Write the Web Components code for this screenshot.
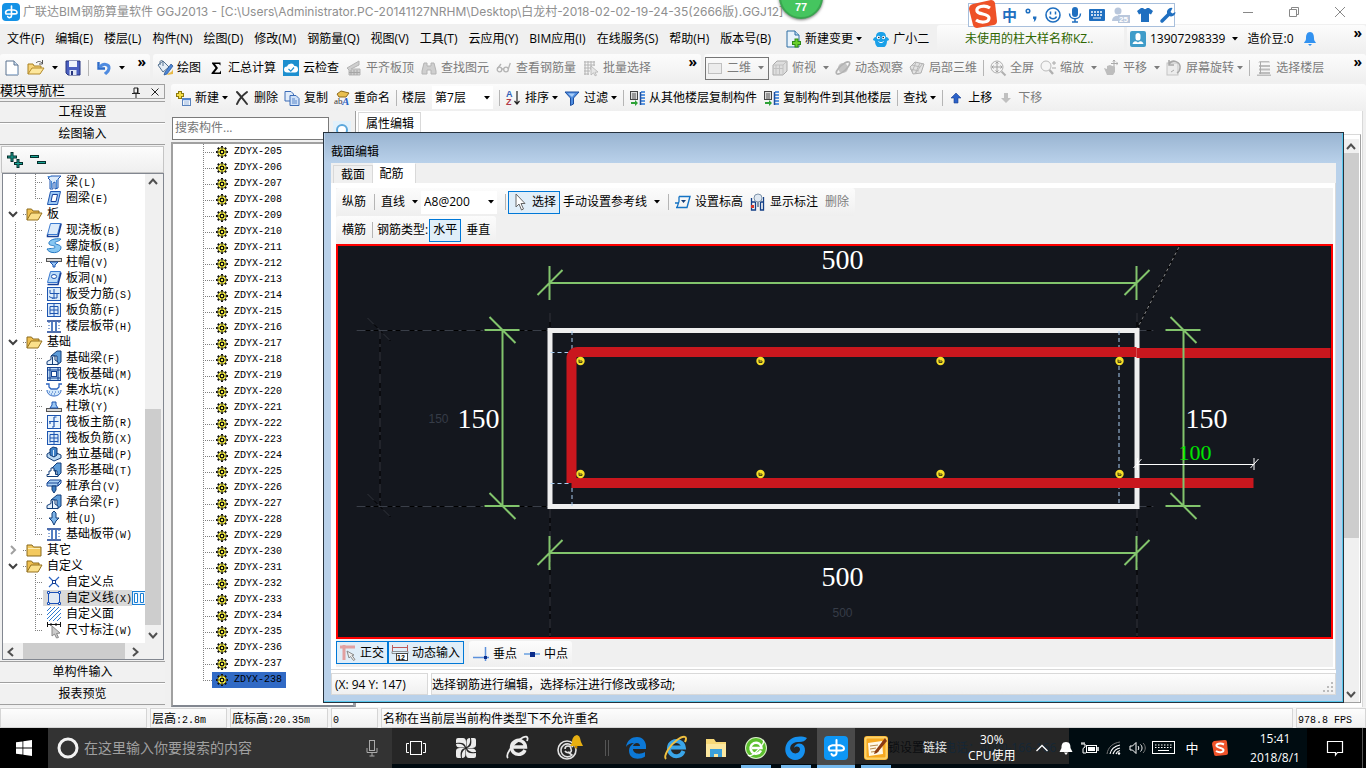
<!DOCTYPE html>
<html lang="zh-CN">
<head>
<meta charset="utf-8">
<meta name="viewport" content="width=device-width, initial-scale=1">
<title>广联达BIM钢筋算量软件 GGJ2013</title>
<style>
html,body{height:100%}
body{margin:0;background:#f0f0f0;color:#000;font:12px/16px "Open Sans","Noto Sans CJK SC",sans-serif;overflow:hidden}
</style>
</head>
<body>
<app-shell></app-shell>
<script>
const MONO = '"Liberation Mono","Noto Sans CJK SC",monospace';

/* Shared drawings. Each entry: [width, height, markup] */
const B = '#1d55b0', L = '#9cc8f4', G = '#b4b4b4', GD = '#9a9a9a';
const ICONS = {
  logo: [18,18,`<rect width="18" height="18" rx="4" fill="#1492e6"/><path d="M9.500 3v9.500a2 2 0 0 1-3.800 1M4 11C2.500 7.500 5.500 6.800 9.500 6.800c3.500 0 5.500.7 5.500 2.700 0 1-.8 1.400-2 1.400H9.500M4 11h5.500" fill="none" stroke="#fff" stroke-width="1.600" stroke-linecap="round"/>`],
  newfile: [16,16,`<path d="M2 1h8l4 4v10H2z" fill="#fff" stroke="#5b7390"/><path d="M10 1v4h4" fill="#cfe0f2" stroke="#5b7390"/><path d="M4 14.500h9.500V7" stroke="#a9bfd8" fill="none"/>`],
  open: [18,16,`<path d="M1 14V4h5l1 2h7v3" fill="#f7d57c" stroke="#a9801f"/><path d="M1 14l4-6h12l-4 6z" fill="#fde79c" stroke="#b48a2a"/><path d="M9 3c2-2 4-2 6 0M15.500 0v4h-3.500" fill="none" stroke="#555"/>`],
  save: [16,16,`<path d="M1 1h14v14H3l-2-2z" fill="#4a5fc0" stroke="#26357f"/><path d="M4 1h8v6H4z" fill="#eef2fb"/><path d="M4.500 10h7v5h-7z" fill="#dfe6f5"/><path d="M6 11h2v4H6z" fill="#26357f"/>`],
  undo: [16,16,`<path d="M2.500 2v6.500H9" fill="none" stroke="#2f6cc8" stroke-width="2.400"/><path d="M3.500 7.500C7 2.500 13.500 4 13 8.500c-.3 3-2.500 4-4 5.500" fill="none" stroke="#4f8be0" stroke-width="3"/>`],
  paint: [16,16,`<path d="M1 5l5-4 6 6-6 5z" fill="#e5edf5" stroke="#53708f"/><path d="M3 5V2c0-2 3-2 3 0v4" fill="none" stroke="#53708f"/><path d="M14 4L8 12l-1 3 3-1 6-8z" fill="#4d86d6" stroke="#24508f" stroke-width=".7"/><path d="M10 15c2-3 5-2 6-6v5z" fill="#e8b945"/>`],
  sigma: [16,16,`<path d="M4 2.500h8.500v3l-1.500-1.500H7l3 4-3.500 4.500h5l1.500-2v3.500H3.500v-1l4-5-3.500-4.500z" fill="#000"/>`],
  cloud: [16,16,`<rect width="16" height="16" fill="#1d8fcf"/><path d="M4 12.500a3 3 0 0 1 0-6 4 4 0 0 1 7.500-.5 3.200 3.200 0 0 1 .5 6.500z" fill="#fff"/><path d="M5.500 9l2.300 2.200L11 7.500" fill="none" stroke="#1d8fcf" stroke-width="1.200"/>`],
  slab: [16,16,`<path d="M1 8L13 1v4L5 9h9v6H3v-5z" fill="#cfcfcf" stroke="${G}"/><path d="M5 10v5M8 10v5M11 10v5M3 12.500h11" stroke="#a6a6a6"/>`],
  binoc: [16,16,`<path d="M3 3h3v3h4V3h3l2 8v3h-5v-4H6v4H1v-3z" fill="#cfcfcf" stroke="${G}"/>`],
  glasses: [16,16,`<g fill="none" stroke="#b4b4b4" stroke-width="1.300"><circle cx="3.500" cy="9.500" r="2.300"/><circle cx="10" cy="9.500" r="2.300"/><path d="M1.500 8.500L5 4M12.300 9l2-6M6 9h2"/></g>`],
  batch: [16,16,`<path d="M1 2h11M1 5h11M1 8h7M1 11h6M1 14h5M2 1v14M5 1v14M8 1v9M11 1v5" stroke="${G}" fill="none"/><path d="M8 6l7 6-3 .3 1.500 3-1.500.5-1.500-3L8 15z" fill="#e6e6e6" stroke="${G}" stroke-width=".8"/>`],
  twod: [16,16,`<rect x="1.500" y="3.500" width="13" height="10" fill="#ececec" stroke="#c0c0c0"/>`],
  cube: [16,16,`<path d="M1 5l4-4h10v10l-4 4H1z" fill="#dedede" stroke="#aaa"/><path d="M1 5h10v10M11 5l4-4M4 5v10M7.500 5v10M1 8.500h10" fill="none" stroke="#c2c2c2"/>`],
  orbit: [16,16,`<circle cx="8" cy="8" r="5" fill="#c4c4c4"/><ellipse cx="8" cy="8" rx="8.500" ry="3" transform="rotate(-42 8 8)" fill="none" stroke="#b2b2b2" stroke-width="1.600"/>`],
  local3d: [16,16,`<path d="M1 7l5-5 9 2-3 9-8 1z" fill="#e3e3e3" stroke="#b0b0b0"/><path d="M3 5l8 2 3-4M6 14l5-7M1 9l9 2M7 2l-4 10M11 3l-5 11" stroke="#b8b8b8" fill="none"/>`],
  full: [16,16,`<circle cx="7" cy="7" r="6" fill="#f3f3f3" stroke="#b0b0b0"/><path d="M7 2v10M2 7h10M5.500 3.500L7 2l1.500 1.500M5.500 10.500L7 12l1.500-1.500M3.500 5.500L2 7l1.500 1.500M10.500 5.500L12 7l-1.500 1.500" fill="none" stroke="#a2a2a2"/><path d="M11.500 11.500l4 4" stroke="#b0b0b0" stroke-width="2"/>`],
  zoom: [16,16,`<circle cx="6" cy="6" r="5" fill="#f5f5f5" stroke="#bbb"/><path d="M9.500 10l3.500 4" stroke="#b0b0b0" stroke-width="2.400"/><path d="M12 3h4M14 1v4M12 8h4" stroke="#aaa"/>`],
  pan: [16,16,`<path d="M1 8l3 1V6l3-1 5 2v5l-2 3H4z" fill="#bdbdbd"/><path d="M11 0v7M8 3.500h7M9.800 1.500L11 0l1.200 1.500M13.500 2.300L15 3.500l-1.500 1.200" stroke="#aaa" fill="none"/>`],
  spin: [16,16,`<rect x="1" y="3" width="11" height="12" fill="#ececec" stroke="#c4c4c4"/><path d="M3 4a6 6 0 0 1 11 4 6 6 0 0 1-3 5M3 0v5h5" fill="none" stroke="#a8a8a8" stroke-width="1.500"/><path d="M5 12l3-2" stroke="#aaa"/>`],
  floors: [16,16,`<path d="M4 1h9l1 1.500H2zM3 5h11v2H3zM3 8.500h11v2H3zM3 12h11v2H3zM1 14.500h14V16H1z" fill="#bdbdbd"/><path d="M4.500 2v12" stroke="#aaa"/>`],
  create: [16,16,`<path d="M5 1v8M1 5h8" stroke="#8c7a10" stroke-width="4"/><path d="M5 2v6M2 5h6" stroke="#f4dd45" stroke-width="2"/><rect x="7.500" y="8.500" width="8" height="7" fill="#f4f8fd" stroke="#5a83bd"/><path d="M8 9.500h7" stroke="#4f86d8" stroke-width="1.500"/><path d="M9 12h5M9 14h5" stroke="#9ab6dc"/>`],
  del: [16,16,`<path d="M3 2c3 3 6 7 10 12M13 2C9 5 5 9 3 14" stroke="#333" stroke-width="2" fill="none" stroke-linecap="round"/>`],
  copy: [16,16,`<path d="M1 1.500h6l2.500 2.500v7H1z" fill="#e1ecfa" stroke="#3c6cb6"/><path d="M6 5.500h6l3 3v7H6z" fill="#cfe1f8" stroke="#3c6cb6"/><path d="M8 9h3M8 11h5M8 13h5" stroke="#5b87c9"/>`],
  rename: [16,16,`<path d="M3 4l4-3 8 2-3 4H5z" fill="#e9bf4f" stroke="#8d6a1c"/><text x="0" y="14" font-size="9" font-family="Liberation Serif" fill="#333">ab</text><text x="8" y="15" font-size="11" font-weight="bold" font-style="italic" font-family="Liberation Serif" fill="#2a63c4">A</text>`],
  sort: [16,16,`<text x="1" y="7" font-size="9" font-weight="bold" font-family="Liberation Sans" fill="#2f5fb8">A</text><text x="1" y="15" font-size="9" font-weight="bold" font-family="Liberation Sans" fill="#b23a48">Z</text><path d="M12 1v12M9.500 11l2.500 3 2.500-3" stroke="#222" fill="none" stroke-width="1.200"/>`],
  filter: [16,16,`<path d="M1 2h14l-5.500 6v6l-3 1.500V8z" fill="#4f8de0" stroke="#1d4fa0"/><path d="M4 3.500h7L8 7z" fill="#a9cdf7"/>`],
  fromfloor: [16,16,`<rect x="1.500" y="1.500" width="7" height="8" fill="#dcdcdc" stroke="#444"/><path d="M3 4h4M3 6h4M3 8h4" stroke="#555"/><path d="M12 2h4M12 5h4M12 8h4M12 11h4M12 14h4" stroke="#5b95de" stroke-width="2"/><path d="M11.500 2v13" stroke="#1f4f9e" stroke-width="1.500"/><path d="M2 12h4v-2l3 3-3 3v-2H2z" fill="#2da237"/>`],
  up: [16,16,`<path d="M8 3l5 5h-3v5H6V8H3z" fill="#2c62c9" stroke="#1b3f8f" stroke-width=".6"/>`],
  down: [16,16,`<path d="M8 13l5-5h-3V3H6v5H3z" fill="#c0c0c0"/>`],
  change: [16,18,`<path d="M2 1h8l4 4v12H2z" fill="#e8f3fb" stroke="#2f6fa3"/><path d="M10 1v4h4" fill="#b7d7ee" stroke="#2f6fa3"/><path d="M11.500 8.500v9M7 13h9" stroke="#2c8a16" stroke-width="4"/><path d="M11.500 9.500v7M8 13h7" stroke="#6ad12c" stroke-width="2"/>`],
  mascot: [16,16,`<path d="M3 6c-2 0-3 2-3 3l2 1c0 3 1 5 2.500 6h7c1.500-1 2.500-3 2.500-6l2-1c0-1-1-3-3-3C13 2 11 1 8 1S3 2 3 6z" fill="#1aa0e8"/><circle cx="5.500" cy="6.500" r="1.700" fill="#fff"/><circle cx="10.500" cy="6.500" r="1.700" fill="#fff"/><circle cx="5.800" cy="6.500" r=".8" fill="#123"/><circle cx="10.200" cy="6.500" r=".8" fill="#123"/><path d="M5.500 10.500c1.500 1.500 3.500 1.500 5 0" stroke="#fff" fill="none"/>`],
  user: [16,16,`<rect width="16" height="16" rx="2" fill="#3f9cc9"/><path d="M5.500 4.500a2.500 2.500 0 0 1 5 0V7a2.500 2.500 0 0 1-5 0zM2.500 13c1-3 3-3.500 5.500-1.500 2.500-2 4.500-1.500 5.500 1.500z" fill="#fff"/>`],
  bell: [14,16,`<path d="M7 1c-3 0-4 3-4 6s-1 3-2 5h12c-1-2-2-2-2-5s-1-6-4-6z" fill="#3292f0"/><path d="M5 13h4l-2 2z" fill="#3292f0"/>`],
  lens: [18,18,`<rect width="18" height="18" fill="#e2f1fb"/><circle cx="9" cy="9" r="5" fill="#fff" stroke="#5ba7dc" stroke-width="2"/>`],
  gear: [12,12,`<path d="M6 0v12M0 6h12M1.800 1.800l8.400 8.400M10.200 1.800L1.800 10.200" stroke="#111" stroke-width="2"/><circle cx="6" cy="6" r="4.400" fill="#f5ee3c" stroke="#222" stroke-width=".6"/><path d="M6 2v8M2 6h8" stroke="#333"/><rect x="4.500" y="4.500" width="3" height="3" fill="#f5ee3c" stroke="#111"/>`],
  plus2: [16,16,`<path d="M5 0v10M0 5h10M11 7v9M7 11.500h9" stroke="#062f2c" stroke-width="3"/><path d="M5 1v8M1 5h8M11 8v7M8 11.500h7" stroke="#18a596" stroke-width="1"/>`],
  minus2: [16,16,`<path d="M0 4.500h9M7 10.500h9" stroke="#062f2c" stroke-width="3"/><path d="M1 4.500h7M8 10.500h7" stroke="#18a596"/>`],
  pin: [10,12,`<path d="M3 2h4v5H3zM1 7.500h8M5 8v4" fill="none" stroke="#222"/><path d="M6.500 2v5" stroke="#222"/>`],
  close: [10,10,`<path d="M1.500 1.500l7 7M8.500 1.500l-7 7" stroke="#222"/>`],
  folder: [16,16,`<path d="M1 3h5l1.500 2H15v9H1z" fill="#f3c95f" stroke="#8b6a1d"/><path d="M2 6.500h12" stroke="#fdeeb5"/>`],
  folderopen: [16,16,`<path d="M1 14V3h4.500L7 5h6v3" fill="#f0c050" stroke="#8b6a1d"/><path d="M1 14l4-7h11l-4 7z" fill="#fbe08a" stroke="#94701e"/>`],
  beam: [16,16,`<path d="M2 4l3-2h10l-3 3v9l-3 1V8L7 9v6H4V6z" fill="#dcebfb" stroke="${B}"/><path d="M1.500 2.500h4M5.500 7v7M10.500 6v8" stroke="#4a8bd6"/>`],
  ring: [16,16,`<path d="M4.500 1.500h10l-3 13h-10z" fill="${L}" stroke="${B}"/><path d="M6.500 4.500h5l-1.500 7H5z" fill="#fff" stroke="#16409a"/>`],
  plate: [16,16,`<path d="M4.500 1.500h10l-3 11h-10z" fill="#dcebfb" stroke="#3a7ad0"/><path d="M1.500 12.500l0 2h10.500l3-12v-1" fill="none" stroke="#16409a" stroke-width="1.500"/>`],
  spiral: [16,16,`<path d="M15 1C9 0 2 2 3 6c1 2 6 1 6 3s-4 1-8 2c2 5 13 5 14-1 .4-4-6-3-6-5s4-1 6-4z" fill="#86c6f2" stroke="#2779c2"/>`],
  cap: [16,16,`<rect x=".5" y="4.500" width="15" height="3" fill="#d9d9d9" stroke="#555"/><path d="M4 8h8l-3 3v2H7v-2z" fill="#9cc8f4" stroke="${B}"/>`],
  hole: [16,16,`<path d="M4.500 1.500h10l-3 11h-10z" fill="#bcdcf8" stroke="#3a7ad0"/><path d="M1.500 14.500h10.500l3-12" fill="none" stroke="#16409a" stroke-width="1.500"/><ellipse cx="8" cy="6.500" rx="2.600" ry="2" fill="#fff" stroke="${B}"/>`],
  force: [16,16,`<rect x="1.500" y="1.500" width="13" height="13" fill="#dcecfb" stroke="${B}"/><path d="M8 3v10M4 4v3.500h9.500M6 12h5V8M3 10.500l4 2" fill="none" stroke="${B}"/>`],
  negbar: [16,16,`<rect x="1.500" y="1.500" width="13" height="13" fill="#dcecfb" stroke="${B}"/><path d="M8 2v12M4 4.500h8M4 8h8M4 11.500h8M4 4.500v8M12 4.500v8" fill="none" stroke="${B}"/>`],
  strip: [16,16,`<path d="M1 3h14M1 14h14" stroke="#163f94" stroke-width="1.600"/><path d="M6 4v9M10 4v9" stroke="${B}" stroke-width="1.500"/><path d="M3 4v9M13 4v9" stroke="${B}" stroke-dasharray="1 2"/>`],
  fbeam: [16,16,`<path d="M5 6l6-5h4v11l-4 3V6z" fill="#5c9bd8" stroke="#123d78"/><path d="M1 14.500v-3l4-2V6h4v4l3 2v2.500z" fill="#e6f1fc" stroke="#123d78"/><path d="M6.500 7v7" stroke="#123d78"/>`],
  raft: [16,16,`<rect x="1.500" y="1.500" width="13" height="13" fill="#bcd9f6" stroke="#174594"/><path d="M4 1v14M12 1v14M1 4h14M1 12h14" stroke="#174594"/><rect x="5.500" y="5.500" width="5" height="5" fill="#fff" stroke="#174594"/>`],
  pit: [16,16,`<path d="M0 2h3v3l2 2h6l2-2V2h3" fill="none" stroke="#2a63c0" stroke-width="1.300"/><path d="M1 8c0 8 14 8 14 0" fill="#d2e8fb" stroke="#2a63c0"/><path d="M3 10h10M5 12h6" stroke="#2a63c0" stroke-dasharray="1 2"/>`],
  pier: [16,16,`<rect x=".5" y="10.500" width="15" height="3" fill="#d9d9d9" stroke="#555"/><path d="M4 10l2-3V4h4v3l2 3z" fill="#9cc8f4" stroke="${B}"/>`],
  mainbar: [16,16,`<rect x="1.500" y="1.500" width="13" height="13" fill="#e8f3fd" stroke="${B}"/><path d="M8 3v10M3 7.500h9.500M4 7v3M10.500 3H8M8 13H6" fill="none" stroke="${B}" stroke-width="1.200"/>`],
  indep: [16,16,`<path d="M1 8l5-3 9 4v3l-7 3-7-4z" fill="#bcd9f2" stroke="#123d78"/><path d="M4 9V3l3-2 4 1v7l-3 2z" fill="#3f80c4" stroke="#123d78"/><path d="M7.500 4v6" stroke="#dcecfb"/>`],
  stripf: [16,16,`<path d="M5 7l6-6h4v10l-4 4V9z" fill="#5c9bd8" stroke="#123d78"/><path d="M1 14.500v-2h2V9h2V6h3v3h1.500v3.500H12v2z" fill="#fff" stroke="#123d78"/>`],
  pilecap: [16,16,`<path d="M1 5l3-3h11v3l-3 3H1z" fill="#a9d0f3" stroke="#174594"/><path d="M1 5h11l3-3M12 5v3" fill="none" stroke="#174594"/><path d="M6 8h4v4l-2 3-2-3z" fill="#3f80c4" stroke="#123d78"/>`],
  pile: [16,16,`<path d="M8 1L6 3v5H3l3 3 2 4 2-4 3-3h-3V3z" fill="#7cb3e8" stroke="#123d78"/>`],
  cpoint: [16,16,`<path d="M3 3l10 10M13 3L3 13" stroke="#2a63c0" stroke-width="1.200"/><rect x="6.500" y="6.500" width="3" height="3" fill="#fff" stroke="#163f94"/>`],
  cline: [16,16,`<rect x="2.500" y="2.500" width="11" height="11" fill="#e1e9f3" stroke="#1a50b8"/><path d="M1.500 1.500h2v2h-2zM12.500 1.500h2v2h-2zM1.500 12.500h2v2h-2zM12.500 12.500h2v2h-2z" fill="#fff" stroke="#1a50b8"/>`],
  cface: [16,16,`<path d="M1 5l4-4M1 9l8-8M1 13l12-12M3 15L15 3M7 15l8-8M11 15l4-4" stroke="#2f7ad0" fill="none"/>`],
  dimmark: [16,16,`<path d="M1 2.500h14M1.500 0v5M14.500 0v5M5 1v3M10 1v3" stroke="#111"/><path d="M6 4l8 7-3.500.5 2 4-2 .5-2-4L6 14z" fill="#ccc" stroke="#888"/>`],
  book: [14,16,`<rect x=".5" y="1.500" width="13" height="13" fill="#e9f5ff" stroke="#1b7fd4"/><path d="M2.500 3.500h3v9h-3zM8.500 3.500h3v9h-3z" fill="#fff" stroke="#1b7fd4"/>`],
  cursor: [16,18,`<path d="M4 1v13l3-3 2.500 6 2-1L9 10.500h4z" fill="#fff" stroke="#666"/>`],
  elev: [16,16,`<path d="M4 2.500h11l-3 11H1" fill="none" stroke="#1573c4" stroke-width="1.400"/><path d="M4 2.500v5l-2 6M0 9h4" fill="none" stroke="#1573c4" stroke-width="1.300"/><path d="M6 6h5l-2.500 3z" fill="#123d78"/>`],
  showdim: [16,18,`<path d="M1.500 5v12h4V9h-4M13.500 4v13h-3V9h3" fill="none" stroke="#133f86" stroke-width="1.300"/><circle cx="8" cy="5" r="4" fill="#dfe8f2" stroke="#8094aa"/><path d="M1 12h3v3H1z" fill="#d4372a"/><path d="M8 9v5" stroke="#8094aa" stroke-width="2"/>`],
  ortho: [16,16,`<path d="M0 2h15M4 0v15" stroke="#e2a0a0" stroke-width="3"/><path d="M7 6l7 4-2 .5 3 4-1.500 1-3-4L9 13z" fill="#eee" stroke="#8a8a8a"/>`],
  dyn: [16,16,`<path d="M.5 0v6M15.500 0v6M0 2.500h16" stroke="#c05a5a"/><path d="M0 6.500h16v2H0z" fill="none" stroke="#777" stroke-width=".8"/><rect x="4.500" y="8.500" width="11" height="7" fill="#fff" stroke="#444"/><text x="5" y="15" font-size="7" font-weight="bold" font-family="Liberation Sans" fill="#000">12</text>`],
  perp: [16,16,`<path d="M12.500 1v14M0 11.500h16" stroke="#5b91dc" stroke-width="1.500"/><rect x="11" y="10" width="3" height="3" fill="#0c2c8a"/>`],
  mid: [16,16,`<path d="M0 8h16" stroke="#6aa0e0" stroke-width="1.500"/><rect x="6" y="6" width="5" height="5" fill="#0c2c8a"/>`],
  /* taskbar */
  win: [16,16,`<path d="M0 2.300l6.500-.9v6.200H0zM7.300 1.300L16 0v7.600H7.300zM0 8.400h6.500v6.200L0 13.700zM7.300 8.400H16V16l-8.700-1.300z" fill="#fff"/>`],
  ringo: [22,22,`<circle cx="11" cy="11" r="9" fill="none" stroke="#f2f2f2" stroke-width="3"/>`],
  mic: [12,18,`<rect x="3.500" y="1.500" width="5" height="10" fill="none" stroke="#aaa"/><path d="M1 9v4.500h10V9M6 14v3M3.500 17h5" fill="none" stroke="#aaa"/>`],
  taskview: [20,16,`<rect x="4.500" y="1.500" width="11" height="13" fill="none" stroke="#fff"/><path d="M3 3.500H.5v9H3M17 3.500h2.500v9H17" fill="none" stroke="#fff"/>`],
  swirl: [22,22,`<g fill="#ececec"><path id="p" d="M1 3q0-2 2-2h5q3 0 3 4v5C10 6 7 5 1 6z"/><path d="M19 1q2 0 2 2v5q0 3-4 3h-5c4-1 5-4 4-10z"/><path d="M21 19q0 2-2 2h-5q-3 0-3-4v-5c1 4 4 5 10 4z"/><path d="M3 21q-2 0-2-2v-5q0-3 4-3h5c-4 1-5 4-4 10z"/><path d="M1 7c4-.500 7 0 9 3.500H5q-4 0-4-3.500zM15 1c.5 4 0 7-3.500 9V5q0-4 3.500-4zM21 15c-4 .5-7 0-9-3.500h5q4 0 4 3.500zM7 21c-.5-4 0-7 3.500-9v5q0 4-3.500 4z"/></g>`],
  iewhite: [24,24,`<path d="M19 14a7 7 0 1 1 .5-3H7" fill="none" stroke="#ececec" stroke-width="3.400"/><path d="M2 22c-3-3 4-13 11-18s10-4 8 1" fill="none" stroke="#ececec" stroke-width="1.800"/>`],
  bellswirl: [28,26,`<g fill="none" stroke="#e2e2e2" stroke-width="1.600"><circle cx="11" cy="15" r="9"/><path d="M17 12a6.500 6.500 0 1 0-1 8l-4-3M9 14a3 3 0 0 1 6 0c2 4-4 5-6 2"/></g><path d="M21 0c-4 1-5 4-5 8l-2 3h13l-2-4c-1-4-1-6-4-7z" fill="#e8b012"/><circle cx="20" cy="12" r="1.500" fill="#c98c00"/>`],
  edge: [22,22,`<path d="M1 10C2 3 7 0 12 0c6 0 9 5 9 9v3H8c0 5 7 6 12 3v4.500c-6 4-16 3-16-6 0-3 2-6 5-7.500C5 6 2 8 1 10zM8 9h7c0-4-6-4-7 0z" fill="#0c78d6"/>`],
  ie: [24,24,`<path d="M19.500 15a7.500 7.500 0 1 1 .3-3.500H7" fill="none" stroke="#3aa5e8" stroke-width="4"/><path d="M2 23c-3-3 4-14 11-19s11-4 8 2" fill="none" stroke="#f0c040" stroke-width="2"/>`],
  explorer: [22,20,`<path d="M1 1h8l2 3h10v15H1z" fill="#f7d878"/><path d="M1 6h20v13H1z" fill="#fbe7a0"/><path d="M5 11h12v8h-4v-3H9v3H5z" fill="#3aa0dc"/>`],
  green: [22,22,`<circle cx="11" cy="11" r="11" fill="#d9f0c8"/><circle cx="11" cy="11" r="10" fill="#5cbf2e"/><path d="M16 13.500a5.500 5.500 0 1 1 .5-2.500H7" fill="none" stroke="#fff" stroke-width="2.500"/><path d="M3 18c2 2 6-1 9-4s8-9 6-11" fill="none" stroke="#fff" stroke-width="1.300"/>`],
  gblue: [24,24,`<path d="M23 2C18 0 12 0 7 3c-9 6-7 20 4 21 8 0 12-8 9-14-3-4-9-3-10 2 2-2 5-2 6 1 0 4-5 6-8 3C3 11 9 5 15 6c4 0 6-1 8-4z" fill="#1590ee"/>`],
  ggj: [24,24,`<rect width="24" height="24" rx="4" fill="#0d96f5"/><path d="M12.500 4v13a2.600 2.600 0 0 1-5 1M5.500 14.500C3 10 7 9 12.500 9c5 0 7.500 1 7.500 3.500 0 1.400-1 2-3 2h-4.500M5.500 14.500h7" fill="none" stroke="#fff" stroke-width="2" stroke-linecap="round"/>`],
  note: [24,24,`<rect width="24" height="24" rx="3" fill="#f6a820"/><rect x="1.500" y="1.500" width="21" height="21" rx="2" fill="none" stroke="#fbd36b" stroke-width="2"/><path d="M4 7l14-2 1 13-14 2z" fill="#fff8e6"/><path d="M6 10l8-1M6 13l6-1M7 16l8-1" stroke="#b98a4a"/><path d="M21 2L11 15l-1 3 3-1L23 5z" fill="#8b3a12"/>`],
  chev: [14,14,`<path d="M1.500 10L7 4.500l5.500 5.500" fill="none" stroke="#fff" stroke-width="1.300"/>`],
  wbell: [14,14,`<path d="M7 1C3 1 2.500 4 2.500 7L.5 11h13l-2-4c0-3-.5-6-4.500-6z" fill="#fff"/><path d="M5 11.500h4L7 14z" fill="#fff"/>`],
  batt: [18,14,`<rect x="5.500" y="4.500" width="10" height="7" fill="none" stroke="#fff"/><rect x="7" y="6" width="7" height="4" fill="#fff"/><path d="M17 6v4" stroke="#fff" stroke-width="1.500"/><path d="M0 3h4v3l-2 1.500V12h3M1 1v2M3 1v2" fill="none" stroke="#fff"/>`],
  wifi: [16,14,`<path d="M1 13C2 6 7 2 14 1" fill="none" stroke="#777"/><path d="M4 13c1-5 5-8 10-9M7 13c1-3 4-5.500 7-6M10 13c.5-1.500 2-3 4-3.500" fill="none" stroke="#fff" stroke-width="1.200"/><circle cx="13" cy="12.500" r="1.200" fill="#fff"/>`],
  vol: [18,14,`<path d="M1 5h2.500L7 1.500v11L3.500 9H1z" fill="none" stroke="#fff"/><path d="M9 5c1 1 1 3 0 4M11.500 3.500c2 2 2 5 0 7" fill="none" stroke="#fff"/><path d="M14 2c3 3 3 7 0 10" fill="none" stroke="#777"/>`],
  kbd: [24,14,`<rect x=".5" y=".5" width="22" height="12" fill="none" stroke="#fff"/><path d="M3 4h17M3 6.500h17" stroke="#fff" stroke-dasharray="1.500 1.500"/><path d="M6 9.500h11" stroke="#fff"/>`],
  sogou: [16,16,`<path d="M2 1l11-1q2 0 2 2l1 11q0 2-2 2L4 16q-2 0-2-2L0 4q0-2 2-3z" fill="#f0532a"/><path d="M12 4.500C8 2.500 4 4 4.500 6s7 1.500 7 4-4.500 3-7.500 1" fill="none" stroke="#fff" stroke-width="2"/>`],
  notice: [18,18,`<path d="M1.500 2.500h15v11h-5l-2 2.500v-2.500h-8z" fill="none" stroke="#fff" stroke-width="1.200"/>`],
  /* input-method bar */
  sbig: [28,28,`<path d="M4 4l18-4q3 0 4 3l2 18q0 3-3 4L8 28q-3 0-4-3L0 9q0-4 4-5z" fill="#ee5127"/><path d="M21 8C15 4 7 7 8 11s12 2 12 7-9 5-13 2" fill="none" stroke="#fff" stroke-width="3.200"/>`],
  punct: [14,16,`<circle cx="4" cy="4" r="1.800" fill="none" stroke="#1f6fc0" stroke-width="1.500"/><path d="M9 9.500h3.500c0 3-1 4.500-3 5.500 1-1.500 1-2.500-.5-3.500z" fill="#1f6fc0"/>`],
  smile: [16,16,`<circle cx="8" cy="8" r="7" fill="none" stroke="#1f6fc0" stroke-width="1.600"/><path d="M5.500 4.500v3M10.500 4.500v3M4.500 9.500c1 3 6 3 7 0" fill="none" stroke="#1f6fc0" stroke-width="1.500"/>`],
  micb: [14,16,`<rect x="4" width="6" height="10" rx="3" fill="#1f6fc0"/><path d="M1.500 6.500c0 7 11 7 11 0M7 12v3M4 15h6" fill="none" stroke="#1f6fc0" stroke-width="1.500"/>`],
  kbdb: [16,12,`<rect width="16" height="12" rx="1" fill="#1f6fc0"/><path d="M2 3h12M2 6h12" stroke="#fff" stroke-width="1.500" stroke-dasharray="2 1"/><path d="M4 9h8" stroke="#fff"/>`],
  person: [18,16,`<circle cx="6" cy="4" r="3.500" fill="#b9c7dc"/><path d="M0 14c0-7 11-7 12 0z" fill="#b9c7dc"/><rect x="6" y="8" width="12" height="8" fill="#b9c7dc"/><text x="7" y="15" font-size="8" font-weight="bold" font-family="Liberation Sans" fill="#fff">25</text>`],
  shirt: [16,14,`<path d="M4 0h2c1 1.500 3 1.500 4 0h2l4 3-2 3.500-2-1V14H4V5.500l-2 1L0 3z" fill="#1f6fc0"/>`],
  wrench: [16,16,`<path d="M2 14l7-7" stroke="#1f6fc0" stroke-width="3.500" stroke-linecap="round"/><path d="M12.500 1a4.300 4.300 0 1 0 3 4l-3 1.500-2-1.500z" fill="#1f6fc0"/>`]
};
const svg = n => { const [w,h,m] = ICONS[n]; return `<svg width="${w}" height="${h}" viewBox="0 0 ${w} ${h}" aria-hidden="true">${m}</svg>`; };
const ARROW = '<svg class="arrow" width="6" height="4" viewBox="0 0 6 4" aria-hidden="true"><path d="M0 0h6L3 3.500z" fill="currentColor"/></svg>';

const BASE = `*{box-sizing:border-box}svg{display:block;flex:none;overflow:visible}button,input,select{font:inherit;color:inherit;margin:0;padding:0;border:0;background:none;border-radius:0}`;
function define(tag, css, html) {
  customElements.define(tag, class extends HTMLElement {
    constructor() {
      super();
      this.attachShadow({mode:'open'});
    }
    connectedCallback() {
      const t = document.createElement('template');
      t.innerHTML = `<style>${BASE}${css}</style>${typeof html === 'function' ? html(this) : html}`;
      this.shadowRoot.replaceChildren(t.content.cloneNode(true));
    }
  });
}

define('ui-icon', `:host{display:block;flex:none}`, el => svg(el.getAttribute('name')));

/* Toolbar button: icon, caption and an optional drop-down arrow */
define('tool-button', `
:host{display:block;flex:none}
button{display:flex;align-items:center;gap:4px;height:23px;white-space:nowrap}
:host([off]) button{color:#7c7c7c}
:host([checked]) button{background:#e0eef9;border:1px solid #0078d7;padding:0 3px}
.arrow{margin-left:3px}
:host([arrow=near]) .arrow{margin-left:-1px}
`, el => `<button type="button"${el.hasAttribute('label')?` aria-label="${el.getAttribute('label')}"`:''}${el.hasAttribute('off')?' disabled':''}${el.hasAttribute('checked')?' aria-pressed="true"':''}>${el.hasAttribute('icon')?svg(el.getAttribute('icon')):''}${el.hasAttribute('label')?'':'<span><slot></slot></span>'}${el.hasAttribute('arrow')?ARROW:''}</button>`);

define('tool-sep', `:host{display:block;flex:none;width:1px;height:16px;background:#b5b5b5}`, '');

define('tool-select', `
:host{display:grid;flex:none;align-items:center;height:23px;background:#fff}
select{appearance:none;grid-area:1/1;width:var(--w,60px);height:23px;padding-left:3px;outline:0}
.arrow{grid-area:1/1;justify-self:end;margin-right:3px}
`, el => `<select aria-label="${el.getAttribute('label')}"><option>${el.getAttribute('value')}</option></select>${ARROW}`);

/* One toolbar strip */
define('tool-bar', `
:host{display:flex;align-items:center;gap:7px;height:26px;padding:0 4px;background:linear-gradient(#fcfcfc,#efefef);border-radius:3px;min-width:0}
:host([grow]){flex:1}
.more{margin-left:auto;height:16px;line-height:12px;font-size:14px;font-weight:700;align-self:flex-start}
`, el => `<slot></slot>${el.hasAttribute('more')?'<button type="button" class="more" aria-label="更多">»</button>':''}`);

define('title-bar', `
:host{display:flex;align-items:center;height:24px;padding:0 20px 0 2px;background:#fff;color:#8f8f8f;position:relative}
h1{font:12px/16px Inter,"Noto Sans CJK SC",sans-serif;margin:0 auto 0 3px;white-space:nowrap}
.ctl{display:flex;gap:34px}
.ctl button{width:12px;height:12px}
.ball{position:absolute;left:779px;top:-25px;width:44px;height:44px;border-radius:50%;background:#45c55f;border:2px solid #3aa650;box-shadow:0 1px 3px #777;color:#fff;font:700 11px/14px "Liberation Sans",sans-serif;display:flex;align-items:flex-end;justify-content:center;padding-bottom:3px}
.ime{position:absolute;left:968px;top:3px;z-index:2;display:flex;align-items:center;gap:7px;height:24px;width:207px;padding-left:33px;background:#fff;border:1px solid #a8bfdc}
.ime .s{position:absolute;left:0;top:-4px}
.ime b{color:#1f6fc0;font-size:15px;line-height:16px}
`, `${svg('logo')}<h1>广联达BIM钢筋算量软件 GGJ2013 - [C:\\Users\\Administrator.PC-20141127NRHM\\Desktop\\白龙村-2018-02-02-19-24-35(2666版).GGJ12]</h1>
<div class="ctl"><button aria-label="最小化"><svg width="12" height="12"><path d="M1 6.500h10" stroke="#888"/></svg></button><button aria-label="还原"><svg width="12" height="12"><path d="M1.500 3.500h7v7h-7zM3.500 3V1.500h7v7H9" fill="none" stroke="#888"/></svg></button><button aria-label="关闭"><svg width="12" height="12"><path d="M1 1l10 10M11 1L1 11" stroke="#888"/></svg></button></div>
<div class="ball">77</div>
<div class="ime"><span class="s">${svg('sbig')}</span><b>中</b>${svg('punct')}${svg('smile')}${svg('micb')}${svg('kbdb')}${svg('person')}${svg('shirt')}${svg('wrench')}</div>`);

define('menu-bar', `
:host{display:flex;align-items:center;height:30px;padding-left:7px}
nav{display:flex;gap:11px;align-items:center;width:930px;flex:none}
nav button{white-space:nowrap}
.tip{color:#2f6600;padding:0 28px;width:187px;flex:none}
.acct{flex:1;margin-left:3px;gap:9px;padding-left:3px}
tool-bar{height:28px}
nav tool-button:first-of-type{margin-left:3px}
`, `<nav>${['文件(F)','编辑(E)','楼层(L)','构件(N)','绘图(D)','修改(M)','钢筋量(Q)','视图(V)','工具(T)','云应用(Y)','BIM应用(I)','在线服务(S)','帮助(H)','版本号(B)'].map(t=>`<button type="button">${t}</button>`).join('')}
<tool-button icon="change" arrow="near">新建变更</tool-button><tool-button icon="mascot">广小二</tool-button></nav>
<tool-bar class="tip"><span>未使用的柱大样名称KZ..</span></tool-bar>
<tool-bar class="acct" more><tool-button icon="user" arrow>13907298339</tool-button><span>造价豆:0</span><ui-icon name="bell"></ui-icon></tool-bar>`);

define('main-tools', `
:host{display:flex;align-items:center;gap:3px;height:30px;padding:0 0 2px}
.file{width:150px}.draw{width:548px}.view{gap:6px}
tool-bar{height:28px}
.file,.draw{flex:none}
.box{display:flex;border:1px solid #767676;height:23px;padding:0 4px 0 1px;margin-left:-3px;margin-right:-3px;align-items:center}
`, `<tool-bar class="file" more><tool-button icon="newfile" label="新建"></tool-button><tool-button icon="open" arrow label="打开"></tool-button><tool-button icon="save" label="保存"></tool-button><tool-sep></tool-sep><tool-button icon="undo" arrow label="撤销"></tool-button></tool-bar>
<tool-bar class="draw" more><tool-button icon="paint">绘图</tool-button><tool-button icon="sigma">汇总计算</tool-button><tool-button icon="cloud">云检查</tool-button><tool-button icon="slab" off>平齐板顶</tool-button><tool-button icon="binoc" off>查找图元</tool-button><tool-button icon="glasses" off>查看钢筋量</tool-button><tool-button icon="batch" off>批量选择</tool-button></tool-bar>
<tool-bar class="view" grow more><div class="box"><tool-button icon="twod" off arrow>二维</tool-button></div><tool-button icon="cube" off arrow>俯视</tool-button><tool-button icon="orbit" off>动态观察</tool-button><tool-button icon="local3d" off>局部三维</tool-button><tool-sep></tool-sep><tool-button icon="full" off>全屏</tool-button><tool-button icon="zoom" off arrow>缩放</tool-button><tool-button icon="pan" off arrow>平移</tool-button><tool-button icon="spin" off arrow="near">屏幕旋转</tool-button><tool-sep></tool-sep><tool-button icon="floors" off>选择楼层</tool-button></tool-bar>`);

/* Scroll bar; --from and --size place the thumb inside the track */
define('scroll-bar', `
:host{display:flex;flex-direction:column;align-items:center;width:16px;background:#f0f0f0;padding:2px 0}
:host([horizontal]){flex-direction:row;width:auto;height:16px;padding:0 2px}
.track{flex:1;width:100%;display:flex;flex-direction:column}
:host([horizontal]) .track{flex-direction:row;height:100%}
.before{flex:0 0 var(--from,0%)}.thumb{flex:0 0 var(--size,30%);background:#cdcdcd}
`, el => { const h = el.hasAttribute('horizontal');
  const p = h ? ['M8 3L3.500 7 8 11','M4 3l4.500 4L4 11'] : ['M3 8l4-4.500L11 8','M3 4l4 4.500L11 4'];
  const a = d => `<svg width="14" height="12" viewBox="0 0 14 12"><path d="${d}" fill="none" stroke="#505050" stroke-width="2"/></svg>`;
  return `${a(p[0])}<div class="track"><div class="before"></div><div class="thumb"></div></div>${a(p[1])}`; });

const TREE = [
 [1,'beam','梁','L'],[1,'ring','圈梁','E',1],
 [0,'folderopen','板'],
 [1,'plate','现浇板','B'],[1,'spiral','螺旋板','B'],[1,'cap','柱帽','V'],[1,'hole','板洞','N'],[1,'force','板受力筋','S'],[1,'negbar','板负筋','F'],[1,'strip','楼层板带','H',1],
 [0,'folderopen','基础'],
 [1,'fbeam','基础梁','F'],[1,'raft','筏板基础','M'],[1,'pit','集水坑','K'],[1,'pier','柱墩','Y'],[1,'mainbar','筏板主筋','R'],[1,'negbar','筏板负筋','X'],[1,'indep','独立基础','P'],[1,'stripf','条形基础','T'],[1,'pilecap','桩承台','V'],[1,'fbeam','承台梁','F'],[1,'pile','桩','U'],[1,'strip','基础板带','W',1],
 [0,'folder','其它'],
 [0,'folderopen','自定义'],
 [2,'cpoint','自定义点'],[2,'cline','自定义线','X',0,1],[2,'cface','自定义面'],[2,'dimmark','尺寸标注','W',1]
];
const DOTV = 'repeating-linear-gradient(#808080 0 1px,transparent 1px 2px)';
const DOTH = 'repeating-linear-gradient(90deg,#808080 0 1px,transparent 1px 2px)';

define('nav-tree', `
:host{display:block;min-width:0;overflow:hidden;background:#fff}
ul{list-style:none;margin:0;padding:0}
li{display:flex;height:16px;line-height:18px;white-space:nowrap}
.g{flex:none;width:20px;height:16px;display:grid;place-items:center}
.line{background:${DOTV} 12px 0/1px 100% no-repeat}
.branch{background:${DOTV} 12px 0/1px 100% no-repeat,${DOTH} 12px 8px/8px 1px no-repeat}
.end{background:${DOTV} 12px 0/1px 8px no-repeat,${DOTH} 12px 8px/8px 1px no-repeat}
.item{display:flex;gap:4px;padding-left:3px}
.l0 .item{gap:5px;background:${DOTH} 0 8px/3px 1px no-repeat}
.sel .item{background:#d9d9d9}
.k{font-family:${MONO};font-size:10px}
`, () => '<ul role="tree">' + TREE.map(([d,ic,t,k,end,sel]) => {
  const chev = ic==='folder' ? '<path d="M3 1l4 4-4 4" stroke="#a0a0a0"/>' : '<path d="M1 3l4 4 4-4" stroke="#404040"/>';
  const guides = d===0 ? `<span class="g"><svg width="10" height="10" fill="none" stroke-width="2">${chev}</svg></span>`
    : `<span class="g ${d===1?'line':''}"></span><span class="g ${end?'end':'branch'}"></span>`;
  return `<li role="treeitem" class="l${d?1:0}${sel?' sel':''}"${sel?' aria-selected="true"':''}>${guides}<span class="item">${svg(ic)}<span>${t}${k?`<span class="k">(${k})</span>`:''}</span></span>${sel?svg('book'):''}</li>`;
}).join('') + '</ul>');

define('nav-panel', `
:host{display:flex;flex-direction:column;width:165px;flex:none;padding-bottom:2px;font-family:${MONO}}
header{display:flex;align-items:center;height:15px;border:1px solid #a0a0a0;border-width:1px 1px 1px 0;padding-right:4px;gap:9px;margin-bottom:2px;flex:none}
h2{font-size:13px;line-height:14px;font-weight:400;margin:0 auto 0 0}
.cat{height:22px;border-top:1px solid #fff;border-bottom:1px solid #a0a0a0;text-align:center;background:#f1f1f1;flex:none;padding-top:2px}
header + .cat,.box + .cat{border-top-color:#a0a0a0}
.tools{display:flex;gap:7px;height:27px;align-items:center;padding-left:5px;background:linear-gradient(#fcfcfc,#efefef);border:1px solid #c5c5c5;margin:1px 1px 0;flex:none}
.box{flex:1;display:grid;grid-template:1fr 16px/1fr 16px;border:1px solid #828790;margin:0 1px 1px 2px;min-height:0;background:#f0f0f0;padding-right:2px}
`, `<header><h2>模块导航栏</h2><button aria-label="固定">${svg('pin')}</button><button aria-label="关闭">${svg('close')}</button></header>
<button class="cat">工程设置</button><button class="cat">绘图输入</button>
<div class="tools"><button aria-label="全部展开">${svg('plus2')}</button><button aria-label="全部折叠">${svg('minus2')}</button></div>
<div class="box"><nav-tree></nav-tree><scroll-bar style="--from:50%;--size:49%"></scroll-bar><scroll-bar horizontal style="--from:4%;--size:92%"></scroll-bar></div>
<button class="cat">单构件输入</button><button class="cat">报表预览</button>`);

define('component-tools', `:host{display:block}tool-bar{height:27px;gap:6px}tool-sep{margin-right:-1px}`,
`<tool-bar><tool-button icon="create" arrow="near">新建</tool-button><tool-button icon="del">删除</tool-button><tool-button icon="copy">复制</tool-button><tool-button icon="rename">重命名</tool-button><tool-sep></tool-sep><span>楼层</span><tool-select label="楼层" value="第7层" style="--w:61px"></tool-select><tool-sep></tool-sep><tool-button icon="sort" arrow="near">排序</tool-button><tool-button icon="filter" arrow="near">过滤</tool-button><tool-sep></tool-sep><tool-button icon="fromfloor">从其他楼层复制构件</tool-button><tool-button icon="fromfloor">复制构件到其他楼层</tool-button><tool-sep></tool-sep><tool-button arrow="near">查找</tool-button><tool-sep></tool-sep><tool-button icon="up">上移</tool-button><tool-button icon="down" off>下移</tool-button></tool-bar>`);

define('component-list', `
:host{display:flex;flex-direction:column;width:184px;flex:none;padding-top:6px;gap:2px}
.search{display:flex;gap:4px;height:23px;padding-left:1px}
input{width:157px;height:23px;border:1px solid #7a7a7a;background:#fff;padding:0 2px 2px;outline:0}
input::placeholder{color:#767676;opacity:1}
.search button{padding-top:3px}
ul{list-style:none;margin:0;flex:1;border:2px solid #a0a0a0;border-color:#a0a0a0 #9a9fa8 #828790 #a0a0a0;background:#fff;padding:0 0 0 30px;overflow:hidden}
li{display:flex;height:16px;background:${DOTV} 0 0/1px 100% no-repeat,${DOTH} 0 8px/12px 1px no-repeat}
li:last-child{background:${DOTV} 0 0/1px 8px no-repeat,${DOTH} 0 8px/9px 1px no-repeat}
li span{display:flex;align-items:center;gap:6px;margin-left:9px;padding:0 4px;font:10px/18px ${MONO}}
.sel span{background:#316ac5}
`, () => { let rows=''; for(let i=205;i<=238;i++) rows+=`<li${i===238?' class="sel"':''}><span>${svg('gear')}ZDYX-${i}</span></li>`;
 return `<div class="search"><input type="search" aria-label="搜索构件" placeholder="搜索构件..."><button aria-label="搜索">${svg('lens')}</button></div><ul>${rows}</ul>`; });

define('property-pane', `
:host{display:flex;flex-direction:column;flex:1;min-width:0;background:#fff;padding-left:2px;margin-right:3px;border-left:1px solid #a0a0a0;border-right:1px solid #d9d9d9}
[role=tab]{align-self:flex-start;height:22px;padding:0 6px 0 7px;border:1px solid #d9d9d9;border-bottom:0;background:#fff;margin-top:1px}
.body{flex:1;display:flex;justify-content:flex-end;border:1px solid #a0a0a0;border-width:1px 1px 1px 0;border-top-color:#d9d9d9;margin:0 1px 4px 0;padding:4px 1px 0 0}
`, `<button role="tab" aria-selected="true">属性编辑</button><div class="body"><scroll-bar style="--size:72%"></scroll-bar></div>`);

/* Section drawing: stirrup, bars and dimensions */
define('section-canvas', `
:host{display:block;flex:1;min-height:0;border:2px solid #f00;background:#14171e}
svg{width:100%;height:100%;overflow:hidden}
`, () => {
  const dots = [361,474].map(y=>[580,760,940,1119].map(x=>`<circle cx="${x}" cy="${y}" r="4.200" fill="#f7e028"/><path d="M${x-1.5} ${y-1.5}v3h3v-1.500h-3" fill="none" stroke="#4a4410"/>`).join('')).join('');
  const hd = y => `M549 ${y}H1136M549 ${y-17}v34M1136 ${y-17}v34M537 ${y+12}l25-25M1124 ${y+12}l25-25`;
  const vd = x => `M${x} 330V506M${x-18} 330h35M${x-18} 506h35M${x-13} 317l26 26M${x-13} 493l26 26`;
  const ghost = 'M356 330.500H549M356 506.500H549M379.500 330V506M549.500 313v15M549.500 509V637M1136.500 313v15M1136.500 509V637M1137 330.500h16M1137 506.500h16M367 318l23 23M367 494l23 23';
  return `<svg viewBox="338 246 992 391" role="img" aria-label="截面配筋图">
  <g fill="none" stroke="#000"><path d="${ghost}"/><path stroke="#3a3f49" stroke-dasharray="9 5 3 5" d="${ghost}"/>
  <path d="M1136 330l43-84"/><path d="M1136 330l43-84" stroke="#8a8a8a" stroke-dasharray="3 3"/></g>
  <rect x="549.500" y="330.500" width="587" height="176" fill="none" stroke="#efefef" stroke-width="5"/>
  <path d="M571.500 331v18M571.500 488v18M550 352.500h18M550 483.500h21M1118.500 331V506" stroke="#a9cdf0" stroke-dasharray="4 3"/>
  <path d="M1136 352H577a6 6 0 0 0-6 6V483M571 483H1253" fill="none" stroke="#c9171e" stroke-width="10"/><path d="M1136 353H1330" stroke="#c9171e" stroke-width="10"/>
  ${dots}
  <path d="${hd(283)}${hd(553)}${vd(502)}${vd(1183)}" fill="none" stroke="#82c46c" stroke-width="2"/>
  <path d="M1137 464.500H1253M1137 458v12M1253.500 458v12M1133 468l8-9M1250 468l8-9" stroke="#fff" stroke-width="1"/>
  <g fill="#fff" font-family="Liberation Serif" font-size="28"><text x="821" y="269">500</text><text x="821" y="586">500</text><text x="457" y="428">150</text><text x="1185" y="428">150</text></g>
  <text x="1178" y="460" fill="#00e600" font-family="Liberation Serif" font-size="22">100</text>
  <g fill="#363c47" font-family="Liberation Sans" font-size="12"><text x="428" y="423">150</text><text x="832" y="617">500</text></g></svg>`;
});

define('section-dialog', `
:host{display:flex;flex-direction:column;background:#b9d1ea;border:1px solid #26323e;padding:0 7px 7px;box-shadow:inset -1px -1px #58c8ee}
header{height:30px;line-height:18px;padding-top:10px;background:linear-gradient(#99b4d1,#b9d1ea);margin:0 -6px;padding-left:6px;flex:none}
.tabs{display:flex;align-items:flex-end;height:20px;background:#f0f0f0;padding-left:2px;flex:none}
.tabs button{height:18px;width:40px;border:1px solid #d9d9d9;border-bottom:0;line-height:16px}
.tabs .on{height:20px;width:43px;background:#fff;padding-right:6px;border-color:#fff #d9d9d9 #fff #fff}
.page{flex:1;display:flex;flex-direction:column;min-height:0;background:#fff;border-right:1px solid #d9d9d9;border-bottom:1px solid #d9d9d9;padding:5px 2px 2px 5px}
.in{flex:1;display:flex;flex-direction:column;background:#f0f0f0;min-height:0}
tool-bar{align-self:flex-start;flex:none}
.r1{height:28px;padding:0 6px}.r2{height:28px;gap:5px;padding:0 6px}
.r1 tool-sep,.r2 tool-sep{margin:0 -1px 0 1px}
.r1 tool-select{margin-left:-4px}
.r1 [checked]{margin:0 -4px}
.r2 label{margin-right:-4px}
.snap{display:flex;height:28px;gap:5px;padding-top:2px;flex:none}
.snap div{display:flex}
footer{display:flex;gap:3px;height:25px;background:#fff;padding-top:3px;flex:none}
footer div{border:1px solid #d9d9d9;background:linear-gradient(#fdfdfd,#f0f0f0);line-height:21px;padding-left:3px}
footer div:first-child{width:97px}footer div:last-child{flex:1;padding-left:0;position:relative}
.grip{position:absolute;right:0;bottom:0}
`, `<header>截面编辑</header>
<div class="tabs" role="tablist"><button role="tab">截面</button><button role="tab" class="on" aria-selected="true">配筋</button></div>
<div class="page"><div class="in">
<tool-bar class="r1"><tool-button>纵筋</tool-button><tool-sep></tool-sep><tool-button arrow>直线</tool-button><tool-select label="钢筋" value="A8@200" style="--w:76px"></tool-select><tool-sep></tool-sep><tool-button checked icon="cursor">选择</tool-button><tool-button arrow>手动设置参考线</tool-button><tool-sep></tool-sep><tool-button icon="elev">设置标高</tool-button><tool-button icon="showdim">显示标注</tool-button><tool-button off>删除</tool-button></tool-bar>
<tool-bar class="r2"><tool-button>横筋</tool-button><tool-sep></tool-sep><label>钢筋类型:</label><tool-button checked>水平</tool-button><tool-button>垂直</tool-button></tool-bar>
<section-canvas></section-canvas>
<div class="snap"><div><tool-button checked icon="ortho">正交</tool-button><tool-button checked icon="dyn">动态输入</tool-button></div><tool-bar><tool-button icon="perp">垂点</tool-button><tool-button icon="mid">中点</tool-button></tool-bar></div>
</div></div>
<footer><div>(X: 94 Y: 147)</div><div>选择钢筋进行编辑，选择标注进行修改或移动;<svg class="grip" width="12" height="12"><path d="M8 0h2v2H8zM4 4h2v2H4zM8 4h2v2H8zM0 8h2v2H0zM4 8h2v2H4zM8 8h2v2H8z" fill="#bbb"/></svg></div></footer>`);

define('status-bar', `
:host{display:flex;gap:3px;height:21px;padding-top:1px;background:#f4f4f4}
div{border:1px solid #d5d5d5;background:linear-gradient(#fdfdfd,#f0f0f0);padding-left:1px;line-height:19px;white-space:nowrap;width:147px;flex:none}
.h{width:77px}.b{width:98px}.n{width:47px}.m{flex:1}.f{width:70px}
i{font:10px/18px ${MONO}}
`, `<div></div><div class="h">层高<i>:2.8m</i></div><div class="b">底标高<i>:20.35m</i></div><div class="n"><i>0</i></div><div class="m">名称在当前层当前构件类型下不允许重名</div><div class="f"><i>978.8 FPS</i></div>`);

define('task-bar', `
:host{display:flex;height:40px;background:#000c11;color:#fff}
button{display:grid;place-items:center;height:40px;flex:none}
.start{width:48px;background:#000}
.find{display:flex;align-items:center;width:344px;flex:none;background:#333;padding:0 14px 0 9px;gap:5px}
.find input{flex:1;min-width:0;font-size:14px;outline:0}
.find input::placeholder{color:#a0a0a0;opacity:1}
.apps{display:flex;width:677px;flex:none;background:linear-gradient(#262626 36px,#000a10 36px)}
.q{display:flex}.q button{width:52px}.q button:first-child{width:48px}
.q i{width:20px;align-self:center;height:16px;background:linear-gradient(#555,#555) 9px 0/1px 100% no-repeat,linear-gradient(#555,#555) 12px 0/1px 100% no-repeat}
.run{display:flex}.run button{width:40px}
.run .open{background:linear-gradient(#76b9ed,#76b9ed) 5px 100%/30px 3px no-repeat}
.run .on{background:linear-gradient(#76b9ed,#76b9ed) 0 100%/100% 3px no-repeat,#4a4a4a;width:38px;margin:0 1px}
.ghost{position:relative;flex:1;display:flex;align-items:center;white-space:nowrap}
.link{margin-left:27px;color:#e6e6e6}
.cpu{text-align:center;margin-left:21px;line-height:16px}
.link,.cpu{position:relative;z-index:1}
.dim{position:absolute;left:-8px;display:flex;gap:8px;color:#0b0d10}
.dim span + span{color:#152636}
.tray{display:flex;margin-left:-39px;flex:1;position:relative}
.tray button{width:24px}.tray .w{width:28px;font-size:13px}
.tray .clock{width:64px;line-height:19px;text-align:center;display:flex;flex-direction:column;justify-content:center;margin-left:9px;flex:none}
.end{background:#000;flex:1;display:flex;justify-content:flex-end}
.tray .end button{width:56px;border-right:1px solid #555;margin-right:4px}
`, `<button class="start" aria-label="开始">${svg('win')}</button>
<div class="find">${svg('ringo')}<input type="search" aria-label="搜索" placeholder="在这里输入你要搜索的内容">${svg('mic')}</div>
<div class="apps"><div class="q"><button aria-label="任务视图">${svg('taskview')}</button><button aria-label="浏览器">${svg('swirl')}</button><button aria-label="网页">${svg('iewhite')}</button><button aria-label="提醒">${svg('bellswirl')}</button><i></i></div>
<div class="run"><button aria-label="Edge">${svg('edge')}</button><button aria-label="Internet Explorer">${svg('ie')}</button><button aria-label="文件资源管理器">${svg('explorer')}</button><button class="open" aria-label="绿色浏览器">${svg('green')}</button><button class="open" aria-label="广联达">${svg('gblue')}</button><button class="on" aria-label="GGJ2013">${svg('ggj')}</button><button class="open" aria-label="便笺">${svg('note')}</button></div>
<div class="ghost"><span class="dim"><span>锁设置</span><span>务电话：4000-166-166</span></span><span class="link">链接</span><span class="cpu">30%<br>CPU使用</span></div></div>
<div class="tray"><button aria-label="显示隐藏的图标">${svg('chev')}</button><button aria-label="通知">${svg('wbell')}</button><button aria-label="电池">${svg('batt')}</button><button aria-label="网络">${svg('wifi')}</button><button aria-label="音量">${svg('vol')}</button><button class="w" aria-label="键盘">${svg('kbd')}</button><button class="w">中</button><button class="w" aria-label="搜狗输入法">${svg('sogou')}</button>
<div class="clock"><span>15:41</span><span>2018/8/1</span></div><div class="end"><button aria-label="操作中心">${svg('notice')}</button></div></div>`);

define('app-shell', `
:host{display:flex;flex-direction:column;height:100vh;min-width:1200px;position:relative}
main{flex:1;display:flex;gap:6px;min-height:0}
.work{flex:1;display:flex;flex-direction:column;min-width:0}
.panes{flex:1;display:flex;min-height:0;position:relative}
section-dialog{position:absolute;left:152px;right:22px;top:21px;bottom:4px}
title-bar,menu-bar,main-tools,status-bar,task-bar{flex:none}
`, `<title-bar></title-bar><menu-bar></menu-bar><main-tools></main-tools>
<main><nav-panel></nav-panel><div class="work"><component-tools></component-tools><div class="panes"><component-list></component-list><property-pane></property-pane><section-dialog></section-dialog></div></div></main>
<status-bar></status-bar><task-bar></task-bar>`);
</script>
</body>
</html>
